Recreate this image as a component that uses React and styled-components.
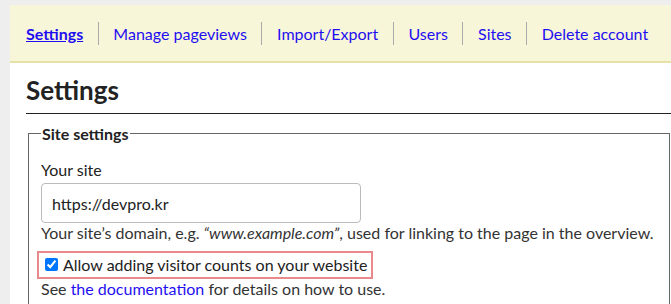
import styled, { createGlobalStyle } from "styled-components";

const GlobalStyle = createGlobalStyle`
  html, body {
    margin: 0;
    padding: 0;
    background: #eeeeee;
    overflow: hidden;
  }

  body {
    font-family: Lato, "Noto Sans", sans-serif;
    font-size: 16px;
    color: #222222;
  }
`;

const navItems = [
  "Settings",
  "Manage pageviews",
  "Import/Export",
  "Users",
  "Sites",
  "Delete account",
];

export default function App() {
  return (
    <>
      <GlobalStyle />
      <Wrapper>
        <Page>
          <Nav>
            {navItems.map((item, i) => (
              <NavLink key={item} href="#" $active={i === 0}>
                {item}
              </NavLink>
            ))}
          </Nav>
          <Main>
            <Title>Settings</Title>
            <Fieldset>
              <Legend>Site settings</Legend>
              <Label htmlFor="site">Your site</Label>
              <Input id="site" type="text" defaultValue="https://devpro.kr" />
              <Help>
                Your site’s domain, e.g. <em>“www.example.com”</em>, used for
                linking to the page in the overview.
              </Help>
              <CheckLabel>
                <Checkbox type="checkbox" defaultChecked />
                Allow adding visitor counts on your website
              </CheckLabel>
              <Note>
                See <a href="#">the documentation</a> for details on how to use.
              </Note>
            </Fieldset>
          </Main>
        </Page>
      </Wrapper>
    </>
  );
}

const Wrapper = styled.div`
  padding: 5px 0 0 10px;
`;

const Page = styled.div`
  width: 678px;
  min-height: 299px;
  background: #ffffff;
`;

const Nav = styled.nav`
  height: 56px;
  display: flex;
  align-items: center;
  padding: 0 16px;
  background: #f7f6d9;
  border-bottom: 2px solid #e6e1a6;
`;

const NavLink = styled.a`
  line-height: 23px;
  padding: 0 14.6px;
  border-left: 1px solid #aaaaaa;
  color: #1f0ff0;
  text-decoration: ${(p) => (p.$active ? "underline" : "none")};
  font-weight: ${(p) => (p.$active ? 700 : 400)};

  &:first-child {
    padding-left: 0;
    border-left: none;
  }
`;

const Main = styled.main`
  padding: 12px 16px 0;
`;

const Title = styled.h1`
  margin: 0;
  padding-bottom: 7px;
  font-size: 26px;
  line-height: 1.2;
  font-weight: 700;
  color: #222222;
  border-bottom: 1px solid #222222;
`;

const Fieldset = styled.fieldset`
  margin: 10px 2px 0;
  padding: 0 12px 10px;
  border: 1px solid #666666;
`;

const Legend = styled.legend`
  padding: 0 1px;
  font-weight: 700;
  line-height: 19px;
`;

const Label = styled.label`
  display: block;
  margin-top: 17px;
  line-height: 19px;
`;

const Input = styled.input`
  display: block;
  box-sizing: border-box;
  width: 320px;
  height: 40px;
  margin-top: 4px;
  padding: 0 10px;
  border: 1px solid #bbbbbb;
  border-radius: 4px;
  font-family: Lato, "Noto Sans", sans-serif;
  font-size: 16px;
  color: #222222;
`;

const Help = styled.div`
  margin-top: 0;
  line-height: 19px;
  color: #333333;
`;

const CheckLabel = styled.label`
  display: inline-flex;
  align-items: center;
  margin: 9px 0 0 -4px;
  padding: 2px 4px 3px 2px;
  border: 2px solid #e8898b;
  line-height: 19px;
`;

const Checkbox = styled.input`
  width: 13px;
  height: 13px;
  margin: 0 5px 0 4px;
`;

const Note = styled.div`
  line-height: 19px;
  color: #333333;

  a {
    color: #1f0ff0;
    text-decoration: none;
  }
`;
